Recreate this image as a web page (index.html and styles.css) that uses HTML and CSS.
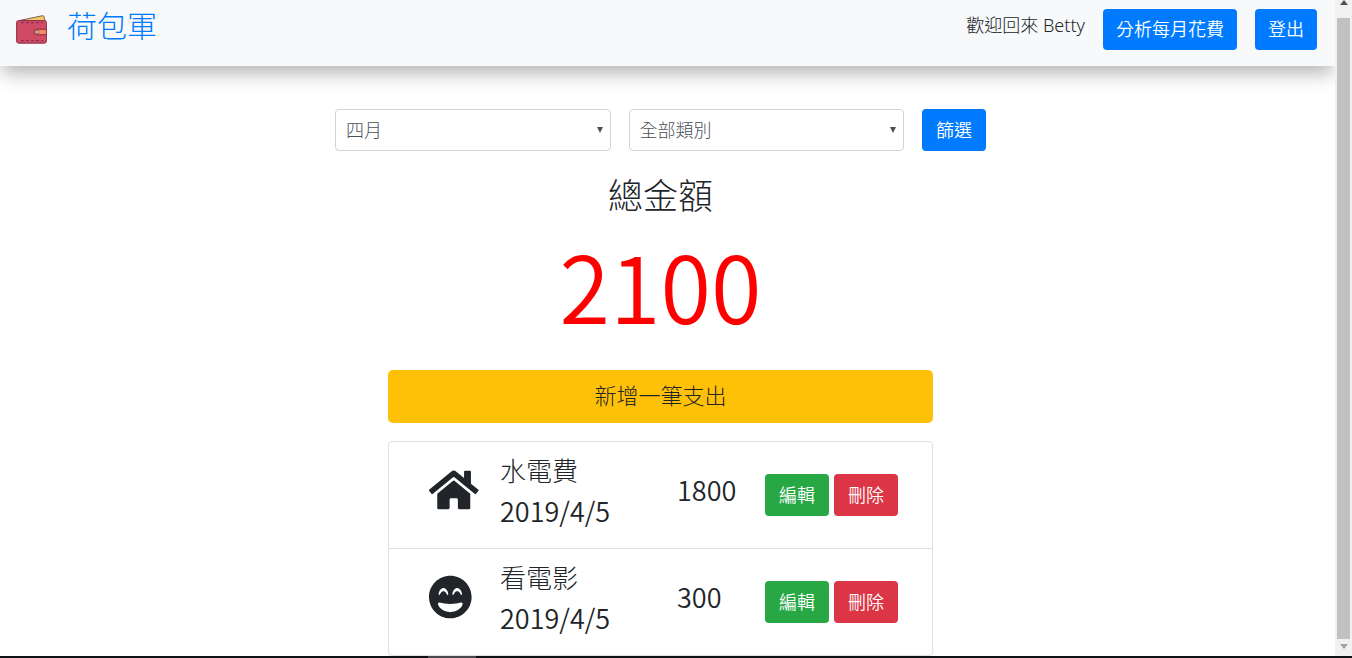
FILE: index.html
```html
<!DOCTYPE html>
<html lang="zh-Hant">
<head>
<meta charset="utf-8">
<title>荷包軍</title>
<link rel="stylesheet" href="styles.css">
</head>
<body>
<div class="window">
  <div class="page">
    <header class="navbar">
      <a class="brand" href="#">
        <svg class="brand-logo" viewBox="0 0 31 29" aria-hidden="true">
          <path d="M3.500 5.500 26.500.7q1.200-.2 1.500 1l1 4.300z" fill="#f7c962" stroke="#5a3a45" stroke-width=".8"/>
          <rect x=".6" y="5.500" width="29.800" height="22.700" rx="2" fill="#cf4a64" stroke="#8f2f4c" stroke-width="1"/>
          <path d="M5 7.700h22M5 25.700h22" stroke="#842c49" stroke-width="1" stroke-dasharray="3 2" fill="none"/>
          <path d="M30.400 14.300H20.500a2.700 2.700 0 0 0 0 5.400h9.900z" fill="#fb8a61" stroke="#7d2b45" stroke-width=".9"/>
          <circle cx="21" cy="17" r="1.500" fill="#fff" stroke="#703048" stroke-width=".8"/>
        </svg>
        <span>荷包軍</span>
      </a>
      <nav class="account">
        <span class="welcome">歡迎回來 Betty</span>
        <button class="btn btn-primary" type="button">分析每月花費</button>
        <button class="btn btn-primary" type="button">登出</button>
      </nav>
    </header>

    <main class="content">
      <form class="filters">
        <div class="select-box">
          <select aria-label="月份"><option>四月</option></select>
          <svg class="caret" viewBox="0 0 6 6" aria-hidden="true"><path d="M0 0h6L3 6z"/></svg>
        </div>
        <div class="select-box">
          <select aria-label="類別"><option>全部類別</option></select>
          <svg class="caret" viewBox="0 0 6 6" aria-hidden="true"><path d="M0 0h6L3 6z"/></svg>
        </div>
        <button class="btn btn-primary" type="button">篩選</button>
      </form>

      <h1 class="total-label">總金額</h1>
      <p class="total">2100</p>

      <div class="records">
        <button class="btn-add" type="button">新增一筆支出</button>
        <ul class="list">
          <li class="item">
            <svg class="icon" viewBox="0 0 576 512" aria-hidden="true"><path d="M280.370 148.260L96 300.110V464a16 16 0 0 0 16 16l112.060-.29a16 16 0 0 0 15.920-16V368a16 16 0 0 1 16-16h64a16 16 0 0 1 16 16v95.640a16 16 0 0 0 16 16.050L464 480a16 16 0 0 0 16-16V300L295.670 148.260a12.190 12.190 0 0 0-15.300 0zM571.600 251.470L488 182.560V44.050a12 12 0 0 0-12-12h-56a12 12 0 0 0-12 12v72.610L318.470 43a48 48 0 0 0-61 0L4.340 251.470a12 12 0 0 0-1.600 16.900l25.500 31A12 12 0 0 0 45.150 301l235.220-193.740a12.190 12.190 0 0 1 15.300 0L530.900 301a12 12 0 0 0 16.900-1.600l25.500-31a12 12 0 0 0-1.700-16.930z"/></svg>
            <div class="detail"><span class="name">水電費</span><span class="date">2019/4/5</span></div>
            <span class="amount">1800</span>
            <div class="actions">
              <button class="btn btn-success" type="button">編輯</button>
              <button class="btn btn-danger" type="button">刪除</button>
            </div>
          </li>
          <li class="item">
            <svg class="icon" viewBox="0 0 496 512" aria-hidden="true"><path fill-rule="evenodd" d="M248 8C111 8 0 119 0 256s111 248 248 248 248-111 248-248S385 8 248 8zM112 223.400c3.300-42.100 32.200-71.400 56-71.400s52.700 29.300 56 71.400c.7 8.600-10.800 11.900-14.900 4.500l-9.500-17c-7.700-13.700-19.200-21.600-31.500-21.600s-23.800 7.900-31.500 21.600l-9.500 17c-4.200 7.400-15.800 4.100-15.100-4.500zM272 223.400c3.300-42.100 32.200-71.400 56-71.400s52.700 29.300 56 71.400c.7 8.600-10.800 11.900-14.900 4.500l-9.500-17c-7.700-13.700-19.200-21.600-31.500-21.600s-23.800 7.900-31.500 21.600l-9.500 17c-4.200 7.400-15.800 4.100-15.100-4.500zM248 432c-60.600 0-134.500-38.300-143.800-93.300-2-11.800 9.200-21.500 20.700-17.900C155.100 330.500 200 336 248 336s92.900-5.500 123.100-15.200c11.400-3.600 22.600 6.100 20.700 17.900-9.300 55-83.200 93.300-143.800 93.300z"/></svg>
            <div class="detail"><span class="name">看電影</span><span class="date">2019/4/5</span></div>
            <span class="amount">300</span>
            <div class="actions">
              <button class="btn btn-success" type="button">編輯</button>
              <button class="btn btn-danger" type="button">刪除</button>
            </div>
          </li>
        </ul>
      </div>
    </main>
  </div>
  <div class="scrollbar" aria-hidden="true">
    <svg class="arrow arrow-up" viewBox="0 0 8 5"><path d="M0 5 4 0l4 5z"/></svg>
    <div class="thumb"></div>
    <svg class="arrow arrow-down" viewBox="0 0 8 5"><path d="M0 0h8L4 5z"/></svg>
  </div>
  <div class="taskbar" aria-hidden="true"><div class="task"></div></div>
</div>
</body>
</html>
```
FILE: styles.css
```css
* {
  box-sizing: border-box;
}

body {
  margin: 0;
  background: #fff;
  color: #212529;
  font-family: "Open Sans", "Noto Sans CJK TC", sans-serif;
  font-size: 18px;
  font-weight: 300;
  line-height: 26px;
}

button,
select {
  font: inherit;
}

.window {
  display: grid;
  grid-template-columns: 1fr 17px;
  grid-template-rows: minmax(0, 1fr) 2px;
  height: 100vh;
}

.page {
  overflow: hidden;
}

.navbar {
  display: flex;
  justify-content: space-between;
  align-items: flex-start;
  padding: 8px 18px 16px 16px;
  background: #f8f9fa;
  box-shadow: 0 9px 18px -2px rgba(0, 0, 0, 0.3);
}

.brand {
  display: flex;
  align-items: center;
  gap: 20px;
  color: #007bff;
  font-size: 30px;
  line-height: 36px;
  text-decoration: none;
}

.brand-logo {
  width: 31px;
  height: 29px;
  margin-top: 6px;
}

.account {
  display: flex;
  gap: 18px;
  padding-top: 1px;
}

.welcome {
  padding-top: 3px;
  font-family: "Noto Sans", "Noto Sans CJK TC", sans-serif;
}

.btn {
  height: 42px;
  padding: 0 14px 1px;
  border: 0;
  border-radius: 4px;
  color: #fff;
  font-weight: 350;
  white-space: nowrap;
}

.navbar .btn {
  height: 41px;
  padding: 0 13px 1px;
}

.btn-primary {
  background: #007bff;
}

.btn-success {
  background: #28a745;
}

.btn-danger {
  background: #dc3545;
}

.content {
  display: flex;
  flex-direction: column;
  align-items: center;
  padding: 43px 14px 0 0;
}

.filters {
  display: flex;
  gap: 18px;
  width: 100%;
  max-width: 651px;
}

.select-box {
  position: relative;
  flex: 1;
}

.select-box select {
  width: 100%;
  height: 42px;
  padding: 0 10px;
  border: 1px solid #ced4da;
  border-radius: 4px;
  background: #fff;
  color: #495057;
  appearance: none;
}

.caret {
  position: absolute;
  top: 18px;
  right: 8px;
  width: 6px;
  height: 6px;
  fill: #495057;
}

.total-label {
  margin: 23px 0 0;
  font-size: 35px;
  font-weight: 300;
  line-height: 44px;
}

.total {
  margin: 11px 0 0;
  color: #f00;
  font-family: "Noto Sans CJK TC", sans-serif;
  font-size: 92px;
  font-weight: 350;
  line-height: 110px;
}

.records {
  width: 100%;
  max-width: 545px;
  margin-top: 31px;
}

.btn-add {
  display: block;
  width: 100%;
  height: 53px;
  padding: 0 0 3px;
  border: 0;
  border-radius: 5px;
  background: #ffc107;
  color: #212529;
  font-size: 22px;
}

.list {
  margin: 18px 0 0;
  padding: 0;
  border: 1px solid #dfdfdf;
  border-radius: 4px;
  list-style: none;
}

.item {
  display: grid;
  grid-template-columns: 71px 1fr 88px auto;
  align-items: center;
  height: 106px;
  padding: 0 34px 0 40px;
}

.item + .item {
  height: 107px;
  border-top: 1px solid #dfdfdf;
}

.icon {
  height: 44px;
  margin-bottom: 10px;
  fill: #212529;
}

.detail {
  display: flex;
  flex-direction: column;
  padding-bottom: 8px;
  font-size: 26px;
  line-height: 40px;
}

.date,
.amount {
  font-family: "Noto Sans CJK TC", sans-serif;
  font-size: 27px;
  font-weight: 350;
  line-height: 40px;
}

.amount {
  padding-bottom: 10px;
}

.actions {
  display: flex;
  gap: 5px;
}

.actions .btn {
  padding: 0 14px 1px;
}

.scrollbar {
  display: flex;
  flex-direction: column;
  align-items: center;
  background: #f1f1f1;
}

.arrow {
  flex: none;
  width: 8px;
  height: 5px;
  fill: #505050;
}

.arrow-up {
  margin-bottom: 13px;
}

.arrow-down {
  margin: 5px 0 7px;
  fill: #a3a3a3;
}

.thumb {
  flex: 1;
  width: 13px;
  background: #c1c1c1;
}

.taskbar {
  grid-column: 1 / -1;
  padding-left: 428px;
  background: #101114;
}

.task {
  width: 48px;
  height: 100%;
  background: #4a4a4c;
}
```
